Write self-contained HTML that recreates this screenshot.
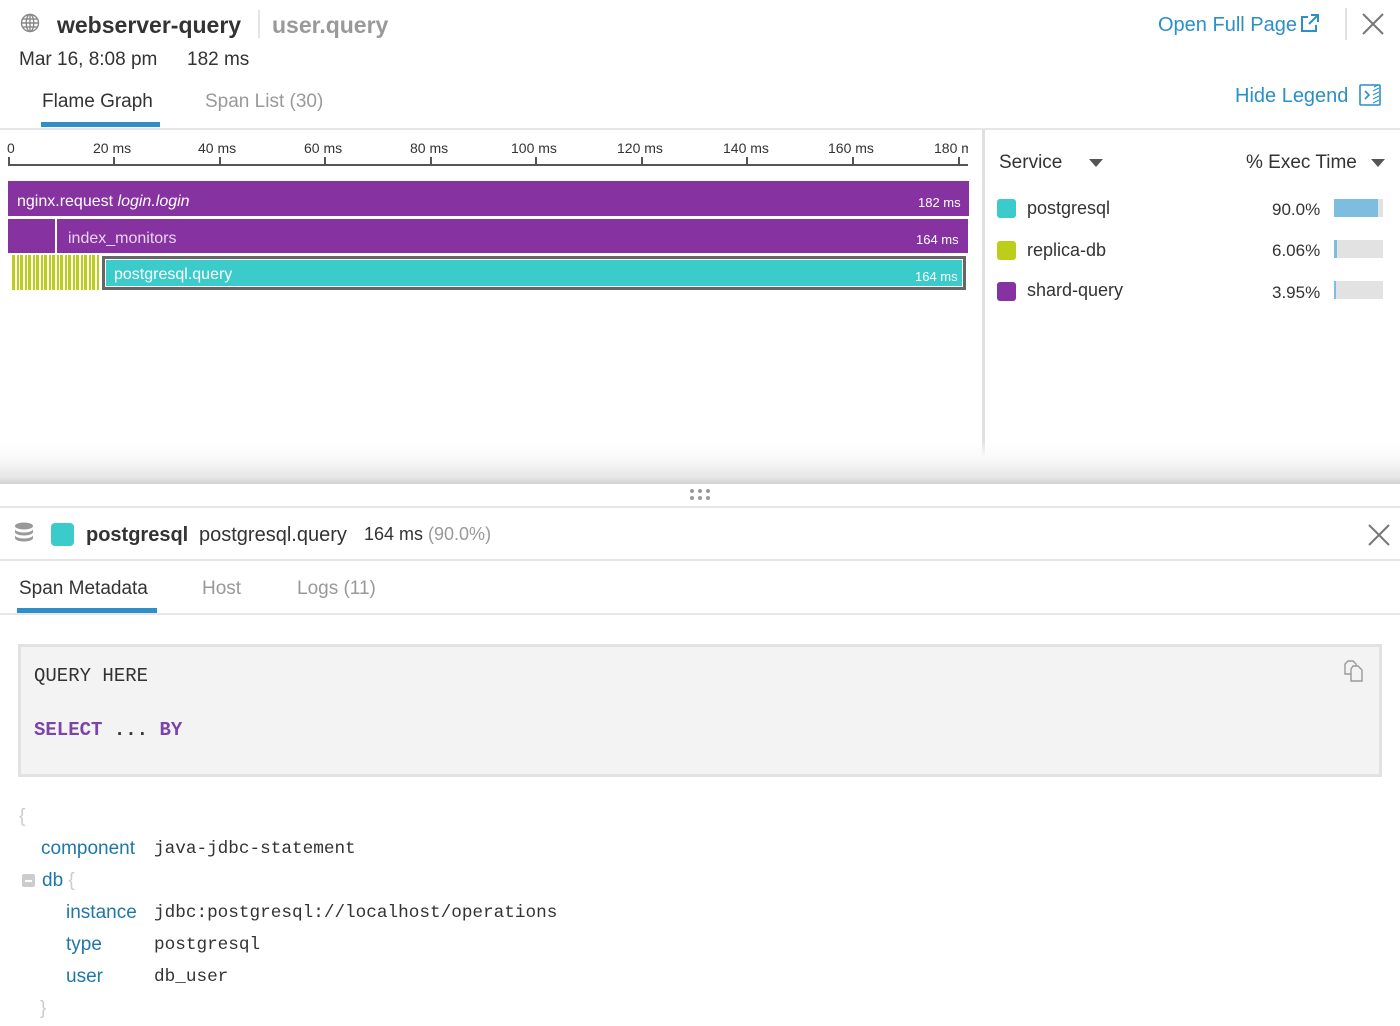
<!DOCTYPE html>
<html><head><meta charset="utf-8"><style>
*{margin:0;padding:0;box-sizing:border-box}
body{width:1400px;height:1026px;overflow:hidden;background:#fff;font-family:"Liberation Sans",sans-serif;color:#333;position:relative}
.a{position:absolute;white-space:nowrap}
.mono{font-family:"Liberation Mono","DejaVu Sans Mono",monospace}
</style></head><body>
<!-- header -->
<svg class="a" style="left:20px;top:13px" width="20" height="20" viewBox="0 0 20 20" fill="none" stroke="#888" stroke-width="1.4"><circle cx="10" cy="10" r="8.5"/><ellipse cx="10" cy="10" rx="3.8" ry="8.5"/><line x1="1.5" y1="10" x2="18.5" y2="10"/><line x1="3" y1="6" x2="17" y2="6"/><line x1="3" y1="14" x2="17" y2="14"/><line x1="10" y1="1.5" x2="10" y2="18.5"/></svg>
<div class="a" style="left:57px;top:12px;font-size:23px;font-weight:bold;color:#333">webserver-query</div>
<div class="a" style="left:258px;top:10px;width:2px;height:28px;background:#e4e4e4"></div>
<div class="a" style="left:272px;top:12px;font-size:23px;font-weight:bold;color:#999">user.query</div>
<div class="a" style="left:19px;top:49px;font-size:19px;color:#333">Mar 16, 8:08 pm</div>
<div class="a" style="left:187px;top:49px;font-size:19px;color:#333">182 ms</div>
<div class="a" style="left:42px;top:91px;font-size:19px;color:#333">Flame Graph</div>
<div class="a" style="left:41px;top:122px;width:119px;height:5px;background:#2f8fc9"></div>
<div class="a" style="left:205px;top:91px;font-size:19px;color:#999">Span List (30)</div>
<div class="a" style="left:1158px;top:14px;font-size:20px;color:#2b8fc8">Open Full Page</div>
<svg class="a" style="left:1299px;top:13px" width="21" height="20" viewBox="0 0 21 20" fill="none" stroke="#2b8fc8" stroke-width="2"><path d="M9 4H3v14h14v-6"/><path d="M12 2h7v7M19 2l-9 9"/></svg>
<div class="a" style="left:1345px;top:8px;width:2px;height:32px;background:#e0e0e0"></div>
<svg class="a" style="left:1361px;top:12px" width="24" height="24" viewBox="0 0 24 24" stroke="#777" stroke-width="2"><path d="M2 2L22 22M22 2L2 22"/></svg>
<div class="a" style="left:1235px;top:85px;font-size:20px;color:#2b8fc8">Hide Legend</div>
<svg class="a" style="left:1359px;top:84px" width="22" height="22" viewBox="0 0 22 22" fill="none" stroke="#2b8fc8" stroke-width="1.6"><rect x="1" y="1" width="20" height="20" rx="1"/><path d="M6 7l4 4-4 4"/><path d="M15 3l4-2M14 7l6-3M14 11l6-3M14 15l6-3M14 19l6-3" stroke-width="1"/></svg>
<div class="a" style="left:0;top:128px;width:1400px;height:2px;background:#e6e6e6"></div>
<!-- axis -->
<div class="a" style="left:8px;top:164px;width:960px;height:1.5px;background:#555"></div>
<div class="a" style="left:8px;top:157px;width:1.5px;height:8px;background:#555"></div>
<div class="a" style="left:7px;top:140px;font-size:14px;color:#333">0</div>
<div class="a" style="left:113px;top:157px;width:1.5px;height:8px;background:#555"></div><div class="a" style="left:93px;top:140px;font-size:14px">20 ms</div>
<div class="a" style="left:219px;top:157px;width:1.5px;height:8px;background:#555"></div><div class="a" style="left:198px;top:140px;font-size:14px">40 ms</div>
<div class="a" style="left:324px;top:157px;width:1.5px;height:8px;background:#555"></div><div class="a" style="left:304px;top:140px;font-size:14px">60 ms</div>
<div class="a" style="left:430px;top:157px;width:1.5px;height:8px;background:#555"></div><div class="a" style="left:410px;top:140px;font-size:14px">80 ms</div>
<div class="a" style="left:535px;top:157px;width:1.5px;height:8px;background:#555"></div><div class="a" style="left:511px;top:140px;font-size:14px">100 ms</div>
<div class="a" style="left:641px;top:157px;width:1.5px;height:8px;background:#555"></div><div class="a" style="left:617px;top:140px;font-size:14px">120 ms</div>
<div class="a" style="left:746px;top:157px;width:1.5px;height:8px;background:#555"></div><div class="a" style="left:723px;top:140px;font-size:14px">140 ms</div>
<div class="a" style="left:852px;top:157px;width:1.5px;height:8px;background:#555"></div><div class="a" style="left:828px;top:140px;font-size:14px">160 ms</div>
<div class="a" style="left:958px;top:157px;width:1.5px;height:8px;background:#555"></div><div class="a" style="left:934px;top:140px;font-size:14px;width:34px;overflow:hidden">180 ms</div>
<!-- bars -->
<div class="a" style="left:8px;top:181px;width:961px;height:35px;background:#8633a1"></div>
<div class="a" style="left:17px;top:193px;font-size:16px;color:#fff">nginx.request <i>login.login</i></div>
<div class="a" style="left:918px;top:195px;font-size:13px;color:#fff">182 ms</div>
<div class="a" style="left:8px;top:219px;width:47px;height:34px;background:#8633a1"></div>
<div class="a" style="left:57px;top:219px;width:911px;height:34px;background:#8633a1"></div>
<div class="a" style="left:68px;top:230px;font-size:16px;color:#e9d6ef">index_monitors</div>
<div class="a" style="left:916px;top:232px;font-size:13px;color:#fff">164 ms</div>
<div class="a" style="left:12px;top:255px;width:88px;height:35px;background:repeating-linear-gradient(90deg,#bccd1a 0 3px,#fff 3px 5px,#bccd1a 5px 7px,#fff 7px 8px)"></div>
<div class="a" style="left:102px;top:256px;width:864px;height:34px;background:#3ccbcb;border:3px solid #666;box-shadow:inset 0 0 0 1px #fff"></div>
<div class="a" style="left:114px;top:266px;font-size:16px;color:#fff">postgresql.query</div>
<div class="a" style="left:915px;top:269px;font-size:13px;color:#fff">164 ms</div>
<!-- legend -->
<div class="a" style="left:982px;top:130px;width:3px;height:353px;background:#e0e0e0"></div>
<div class="a" style="left:999px;top:152px;font-size:19px;color:#333">Service</div>
<svg class="a" style="left:1089px;top:159px" width="14" height="8"><path d="M0 0h14L7 8z" fill="#555"/></svg>
<div class="a" style="left:1246px;top:152px;font-size:19px;color:#333">% Exec Time</div>
<svg class="a" style="left:1371px;top:159px" width="14" height="8"><path d="M0 0h14L7 8z" fill="#555"/></svg>
<div class="a" style="left:997px;top:199px;width:19px;height:19px;border-radius:3px;background:#3ccbcb"></div>
<div class="a" style="left:1027px;top:198px;font-size:18px">postgresql</div>
<div class="a" style="left:1272px;top:200px;font-size:17px">90.0%</div>
<div class="a" style="left:1334px;top:199px;width:49px;height:18px;background:#e2e2e2"></div><div class="a" style="left:1334px;top:199px;width:44px;height:18px;background:#7dbde0"></div>
<div class="a" style="left:997px;top:241px;width:19px;height:19px;border-radius:3px;background:#bccd1a"></div>
<div class="a" style="left:1027px;top:240px;font-size:18px">replica-db</div>
<div class="a" style="left:1272px;top:241px;font-size:17px">6.06%</div>
<div class="a" style="left:1334px;top:240px;width:49px;height:18px;background:#e2e2e2"></div><div class="a" style="left:1334px;top:240px;width:3px;height:18px;background:#7dbde0"></div>
<div class="a" style="left:997px;top:282px;width:19px;height:19px;border-radius:3px;background:#8633a1"></div>
<div class="a" style="left:1027px;top:280px;font-size:18px">shard-query</div>
<div class="a" style="left:1272px;top:283px;font-size:17px">3.95%</div>
<div class="a" style="left:1334px;top:281px;width:49px;height:18px;background:#e2e2e2"></div><div class="a" style="left:1334px;top:281px;width:2px;height:18px;background:#7dbde0"></div>
<!-- shadow -->
<div class="a" style="left:0;top:440px;width:1400px;height:44px;background:linear-gradient(#fff0,#fafafa 40%,#e6e6e6 85%,#d0d0d0)"></div>
<svg class="a" style="left:689px;top:488px" width="24" height="14" fill="#999"><circle cx="3" cy="3" r="2"/><circle cx="11" cy="3" r="2"/><circle cx="19" cy="3" r="2"/><circle cx="3" cy="10" r="2"/><circle cx="11" cy="10" r="2"/><circle cx="19" cy="10" r="2"/></svg>
<div class="a" style="left:0;top:506px;width:1400px;height:2px;background:#e6e6e6"></div>
<!-- span header -->
<svg class="a" style="left:14px;top:522px" width="20" height="22" viewBox="0 0 20 22" fill="#999"><ellipse cx="10" cy="4" rx="9" ry="3.5"/><path d="M1 7c0 2 4 3.5 9 3.5s9-1.5 9-3.5v3c0 2-4 3.5-9 3.5S1 12 1 10z"/><path d="M1 13c0 2 4 3.5 9 3.5s9-1.5 9-3.5v3c0 2-4 3.5-9 3.5S1 18 1 16z"/></svg>
<div class="a" style="left:51px;top:523px;width:23px;height:23px;border-radius:4px;background:#3ccbcb"></div>
<div class="a" style="left:86px;top:524px;font-size:20px;font-weight:bold;color:#333">postgresql</div>
<div class="a" style="left:199px;top:524px;font-size:20px;color:#333">postgresql.query</div>
<div class="a" style="left:364px;top:524px;font-size:18px;color:#333">164 ms <span style="color:#999">(90.0%)</span></div>
<svg class="a" style="left:1367px;top:523px" width="24" height="24" stroke="#777" stroke-width="2"><path d="M2 2L22 22M22 2L2 22"/></svg>
<div class="a" style="left:0;top:559px;width:1400px;height:2px;background:#e6e6e6"></div>
<div class="a" style="left:19px;top:578px;font-size:19px;color:#333">Span Metadata</div>
<div class="a" style="left:17px;top:608px;width:140px;height:6px;background:#2f8fc9"></div>
<div class="a" style="left:202px;top:578px;font-size:19px;color:#999">Host</div>
<div class="a" style="left:297px;top:578px;font-size:19px;color:#999">Logs (11)</div>
<div class="a" style="left:0;top:613px;width:1400px;height:2px;background:#e6e6e6"></div>
<!-- code box -->
<div class="a" style="left:18px;top:644px;width:1364px;height:133px;background:#f3f3f3;border:3px solid #e2e2e2"></div>
<div class="a mono" style="left:34px;top:665px;font-size:19px;color:#333">QUERY HERE</div>
<div class="a mono" style="left:34px;top:719px;font-size:19px;font-weight:bold;color:#7a44a8">SELECT <span style="color:#333">...</span> BY</div>
<svg class="a" style="left:1343px;top:659px" width="22" height="24" viewBox="0 0 22 24" fill="#f3f3f3" stroke="#999" stroke-width="1.4"><path d="M5 2h5l3 3v10H2V5z"/><path d="M10 7h5l4 4v11H8V10z"/></svg>
<!-- json -->
<div class="a" style="left:19px;top:806px;font-size:19px;color:#ccc">{</div>
<div class="a" style="left:41px;top:838px;font-size:19px;color:#1f77a8">component</div>
<div class="a mono" style="left:154px;top:839px;font-size:17.7px;color:#333">java-jdbc-statement</div>
<div class="a" style="left:22px;top:874px;width:13px;height:13px;border-radius:2px;background:#ccc"></div>
<div class="a" style="left:25px;top:880px;width:7px;height:2px;background:#fff"></div>
<div class="a" style="left:42px;top:870px;font-size:19px;color:#1f77a8">db <span style="color:#ccc">{</span></div>
<div class="a" style="left:66px;top:902px;font-size:19px;color:#1f77a8">instance</div>
<div class="a mono" style="left:154px;top:903px;font-size:17.7px;color:#333">jdbc:postgresql://localhost/operations</div>
<div class="a" style="left:66px;top:934px;font-size:19px;color:#1f77a8">type</div>
<div class="a mono" style="left:154px;top:935px;font-size:17.7px;color:#333">postgresql</div>
<div class="a" style="left:66px;top:966px;font-size:19px;color:#1f77a8">user</div>
<div class="a mono" style="left:154px;top:967px;font-size:17.7px;color:#333">db_user</div>
<div class="a" style="left:40px;top:998px;font-size:19px;color:#ccc">}</div>
</body></html>
